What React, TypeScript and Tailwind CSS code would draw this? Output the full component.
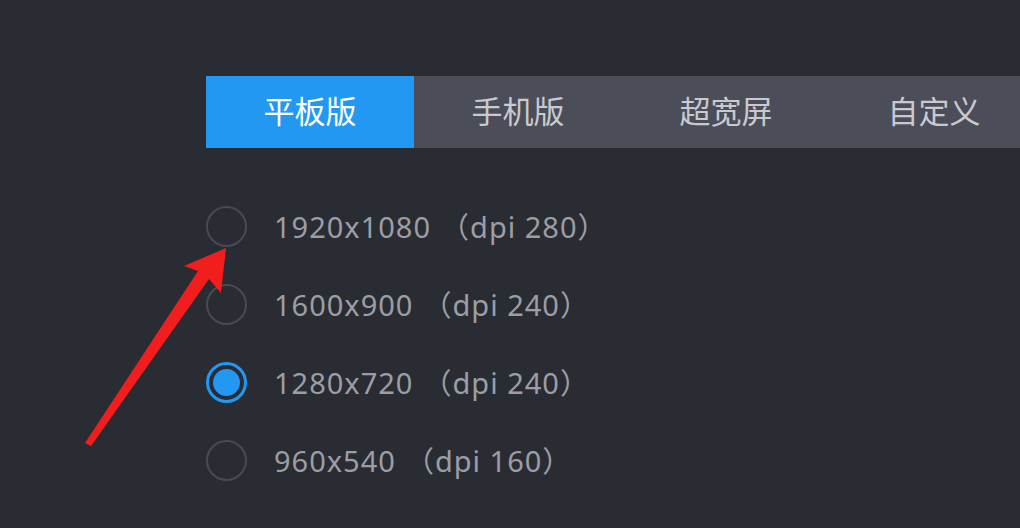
import { useState } from 'react';

const TABS = ['平板版', '手机版', '超宽屏', '自定义'];

const OPTIONS = [
  { res: '1920x1080', dpi: 280 },
  { res: '1600x900', dpi: 240 },
  { res: '1280x720', dpi: 240 },
  { res: '960x540', dpi: 160 },
];

const CJK = { fontFamily: '"Noto Sans CJK SC", "Noto Sans", sans-serif' };
const MIXED = { fontFamily: '"Noto Sans", "Noto Sans CJK SC", sans-serif' };

export default function App() {
  const [tab, setTab] = useState(0);
  const [picked, setPicked] = useState(2);

  return (
    <div className="relative w-[1020px] h-[528px] overflow-hidden bg-[#2a2c33]" style={CJK}>
      <div className="ml-[206px] mt-[76px] flex h-[72px] bg-[#4b4d59] overflow-hidden">
        {TABS.map((label, i) => (
          <button
            key={label}
            onClick={() => setTab(i)}
            className={`w-[208px] shrink-0 flex items-center justify-center pb-[4px] text-[31px] ${
              tab === i ? 'bg-[#2298f2] text-white' : 'text-[#c9cacf]'
            }`}
          >
            {label}
          </button>
        ))}
      </div>

      <div className="ml-[206px] mt-[58px] flex flex-col gap-[37px]">
        {OPTIONS.map((o, i) => (
          <label key={o.res} className="flex items-center h-[41px] cursor-pointer" onClick={() => setPicked(i)}>
            {picked === i ? (
              <span className="w-[41px] h-[41px] rounded-full border-[3px] border-[#2298f2] flex items-center justify-center">
                <span className="w-[27px] h-[27px] rounded-full bg-[#2298f2]" />
              </span>
            ) : (
              <span className="w-[41px] h-[41px] rounded-full border-2 border-[#484b54]" />
            )}
            <span className="ml-[27px] text-[29px] tracking-[1px] text-[#9c9ea5]" style={MIXED}>
              {o.res}
              <span className="ml-[9px]">（dpi {o.dpi}）</span>
            </span>
          </label>
        ))}
      </div>

      <svg className="absolute left-0 top-0 pointer-events-none" width="1020" height="528">
        <polygon
          points="226,248 221,293 209,279 91,446 85,443 198,271 184,266"
          fill="#f21d1d"
        />
      </svg>
    </div>
  );
}
